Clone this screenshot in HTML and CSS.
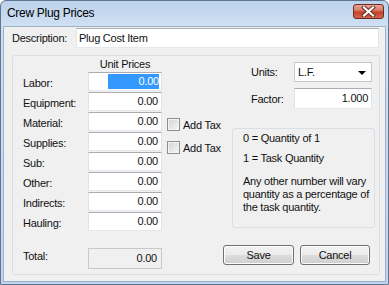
FILE: index.html
```html
<!DOCTYPE html>
<html lang="en">
<head>
    <meta charset="UTF-8">
    <title>Crew Plug Prices</title>
    <link rel="stylesheet" href="styles.css">
</head>
<body>
    <div class="window">
        <div class="titlebar">
            <span class="title">Crew Plug Prices</span>
            <div class="close">
                <svg width="15" height="11" viewBox="0 0 15 11">
                    <path d="M3 1.5 L12 9.5 M12 1.5 L3 9.5" stroke="#5a2a22" stroke-width="4" stroke-linecap="square"/>
                    <path d="M3 1.5 L12 9.5 M12 1.5 L3 9.5" stroke="#ffffff" stroke-width="2.2" stroke-linecap="square"/>
                </svg>
            </div>
        </div>
        <div class="client">
            <div class="desc-row">
                <span class="desc-label">Description:</span>
                <div class="field desc-field">Plug Cost Item</div>
            </div>
            <div class="group">
                <div class="prices">
                    <div></div>
                    <div class="col-head">Unit Prices</div>
                    <div class="lbl">Labor:</div>
                    <div class="field num"><span class="sel">0.00</span></div>
                    <div class="lbl">Equipment:</div>
                    <div class="field num">0.00</div>
                    <div class="lbl">Material:</div>
                    <div class="field num">0.00</div>
                    <div class="lbl">Supplies:</div>
                    <div class="field num">0.00</div>
                    <div class="lbl">Sub:</div>
                    <div class="field num">0.00</div>
                    <div class="lbl">Other:</div>
                    <div class="field num">0.00</div>
                    <div class="lbl">Indirects:</div>
                    <div class="field num">0.00</div>
                    <div class="lbl">Hauling:</div>
                    <div class="field num">0.00</div>
                    <div class="lbl total-lbl">Total:</div>
                    <div class="field num total">0.00</div>
                </div>
                <div class="taxes">
                    <div class="check"><span class="box"></span>Add Tax</div>
                    <div class="check"><span class="box"></span>Add Tax</div>
                </div>
                <div class="side">
                    <div class="side-row">
                        <span class="side-lbl">Units:</span>
                        <div class="combo">L.F.<span class="arrow"></span></div>
                    </div>
                    <div class="side-row factor-row">
                        <span class="side-lbl">Factor:</span>
                        <div class="field num factor">1.000</div>
                    </div>
                    <div class="info">
                        <p>0 = Quantity of 1</p>
                        <p class="gap">1 = Task Quantity</p>
                        <p class="gap-lg">Any other number will vary quantity as a percentage of the task quantity.</p>
                    </div>
                    <div class="buttons">
                        <div class="btn save">Save</div>
                        <div class="btn cancel">Cancel</div>
                    </div>
                </div>
            </div>
        </div>
    </div>
</body>
</html>
```

FILE: styles.css
```css
* {
    box-sizing: border-box;
}

body {
    margin: 0;
    background: #ffffff;
    font-family: "Liberation Sans", Arial, sans-serif;
    font-size: 11px;
    letter-spacing: -0.25px;
    color: #111111;
}

.window {
    width: 389px;
    height: 285px;
    border: 1px solid #5f7590;
    border-radius: 6px 6px 0 0;
    padding: 0 2px 2px 2px;
    background: linear-gradient(#bcd1ec, #d0e0f3 25px, #bfd4ee);
    display: flex;
    flex-direction: column;
}

.titlebar {
    height: 25px;
    display: flex;
    align-items: flex-start;
    justify-content: space-between;
    padding: 0 2px 0 4px;
}

.title {
    font-size: 12px;
    letter-spacing: -0.3px;
    line-height: 25px;
    color: #000000;
}

.close {
    width: 31px;
    height: 15px;
    margin-top: 3px;
    border: 1px solid #6b2c24;
    border-radius: 3px;
    background: linear-gradient(#eaa292, #da7e69 40%, #c6412a 55%, #d2654c);
    display: flex;
    align-items: center;
    justify-content: center;
}

.client {
    flex: 1;
    background: #f0f0f0;
    border: 1px solid #9db1c8;
    padding: 1px 0 0 8px;
}

.desc-row {
    display: flex;
    align-items: center;
    height: 20px;
}

.desc-label {
    width: 64px;
}

.field {
    height: 20px;
    background: #ffffff;
    border: 1px solid #e2e3ea;
    border-top-color: #abadb3;
    border-bottom-color: #e3e9ef;
    line-height: 18px;
    white-space: nowrap;
}

.desc-field {
    width: 303px;
    padding-left: 2px;
}

.group {
    width: 368px;
    height: 220px;
    margin-top: 7px;
    border: 1px solid #d5dfe5;
    border-radius: 3px;
    padding-left: 10px;
    display: flex;
}

.prices {
    display: grid;
    grid-template-columns: 65px 74px;
    grid-template-rows: 16px repeat(8, 20px) 37px;
    align-items: start;
}

.col-head {
    text-align: center;
    line-height: 14px;
    padding-top: 1px;
}

.lbl {
    line-height: 20px;
    padding-top: 1px;
}

.num {
    text-align: right;
    padding-right: 3px;
    height: 19px;
    line-height: 17px;
}

.sel {
    display: inline-block;
    width: 51px;
    background: #3399ff;
    color: #ffffff;
    line-height: 15px;
    margin-right: -1px;
}

.total-lbl {
    margin-top: 16px;
    line-height: 14px;
}

.total {
    margin-top: 16px;
    height: 21px;
    line-height: 19px;
    background: #f0f0f0;
    border-color: #c9c9c9;
    padding-right: 4px;
}

.taxes {
    width: 56px;
    margin-left: 5px;
    padding-top: 57px;
}

.check {
    height: 23px;
    display: flex;
    align-items: center;
}

.box {
    width: 13px;
    height: 13px;
    margin-right: 3px;
    border: 1px solid #8e8f8f;
    background: linear-gradient(135deg, #d4d4d4, #f6f6f6);
    box-shadow: inset 0 0 0 1px #f4f4f4;
}

.side {
    width: 151px;
    padding-top: 6px;
}

.side-row {
    display: flex;
    align-items: center;
    padding-left: 28px;
}

.side-lbl {
    width: 43px;
}

.combo {
    width: 78px;
    height: 20px;
    background: #ffffff;
    border: 1px solid #c4c8cf;
    padding-left: 3px;
    line-height: 18px;
    position: relative;
}

.arrow {
    position: absolute;
    right: 5px;
    top: 8px;
    border-left: 4px solid transparent;
    border-right: 4px solid transparent;
    border-top: 4px solid #000000;
}

.factor-row {
    margin-top: 6px;
}

.factor {
    width: 78px;
    height: 21px;
    line-height: 19px;
}

.info {
    margin: 19px 0 0 9px;
    width: 143px;
    height: 100px;
    border: 1px solid #d5dfe5;
    border-radius: 3px;
    padding: 3px 0 0 10px;
    line-height: 13px;
}

.info p {
    margin: 0;
}

.info .gap {
    margin-top: 7px;
}

.info .gap-lg {
    margin-top: 10px;
    width: 126px;
}

.buttons {
    display: flex;
    gap: 6px;
    margin-top: 17px;
}

.btn {
    height: 20px;
    border: 1px solid #707070;
    border-radius: 3px;
    background: linear-gradient(#f2f2f2, #ebebeb 50%, #dddddd 51%, #cfcfcf);
    box-shadow: inset 0 0 0 1px #fcfcfc;
    text-align: center;
    line-height: 18px;
}

.save {
    width: 71px;
}

.cancel {
    width: 70px;
}
```
